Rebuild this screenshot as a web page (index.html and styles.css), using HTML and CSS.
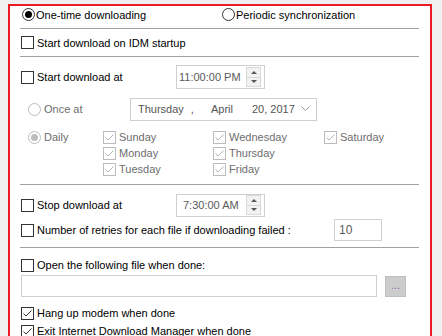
FILE: index.html
```html
<!DOCTYPE html>
<html>
  <head>
    <title>Scheduler</title>
    <link rel="stylesheet" href="styles.css">
  </head>
  <body>
    <div class="frame">
      <div class="row row-mode">
        <label class="opt opt-first"><span class="rb on"></span>One-time downloading</label>
        <label class="opt"><span class="rb"></span>Periodic synchronization</label>
      </div>
      <div class="sep sep-1"></div>

      <div class="row row-startup">
        <label class="opt"><span class="cb"></span>Start download on IDM startup</label>
      </div>
      <div class="sep"></div>

      <div class="row row-start">
        <label class="opt opt-time"><span class="cb"></span>Start download at</label>
        <div class="timebox">
          <span class="time-text">11:00:00 PM</span>
          <span class="spin"><span class="up"></span><span class="down"></span></span>
        </div>
      </div>

      <div class="row row-once">
        <label class="opt opt-sub dis"><span class="rb dis"></span>Once at</label>
        <div class="datebox">
          <span class="d-day">Thursday</span>
          <span class="d-comma">,</span>
          <span class="d-month">April</span>
          <span class="d-year">20, 2017</span>
          <svg class="chev" width="9" height="6" viewBox="0 0 9 6"><polyline points="0.5,0.5 4.5,4.5 8.5,0.5" fill="none" stroke="#9a9a9a" stroke-width="1"/></svg>
        </div>
      </div>

      <div class="daily">
        <label class="opt opt-sub opt-daily dis"><span class="rb dis on"></span>Daily</label>
        <div class="days">
          <label class="opt dis"><span class="cb dis on"><svg width="11" height="11" viewBox="0 0 11 11"><polyline points="1.5,5.5 4,8 9.5,2.5" fill="none" stroke="#b4b4b4" stroke-width="1"/></svg></span>Sunday</label>
          <label class="opt dis"><span class="cb dis on"><svg width="11" height="11" viewBox="0 0 11 11"><polyline points="1.5,5.5 4,8 9.5,2.5" fill="none" stroke="#b4b4b4" stroke-width="1"/></svg></span>Wednesday</label>
          <label class="opt dis"><span class="cb dis on"><svg width="11" height="11" viewBox="0 0 11 11"><polyline points="1.5,5.5 4,8 9.5,2.5" fill="none" stroke="#b4b4b4" stroke-width="1"/></svg></span>Saturday</label>
          <label class="opt dis"><span class="cb dis on"><svg width="11" height="11" viewBox="0 0 11 11"><polyline points="1.5,5.5 4,8 9.5,2.5" fill="none" stroke="#b4b4b4" stroke-width="1"/></svg></span>Monday</label>
          <label class="opt dis"><span class="cb dis on"><svg width="11" height="11" viewBox="0 0 11 11"><polyline points="1.5,5.5 4,8 9.5,2.5" fill="none" stroke="#b4b4b4" stroke-width="1"/></svg></span>Thursday</label>
          <span></span>
          <label class="opt dis"><span class="cb dis on"><svg width="11" height="11" viewBox="0 0 11 11"><polyline points="1.5,5.5 4,8 9.5,2.5" fill="none" stroke="#b4b4b4" stroke-width="1"/></svg></span>Tuesday</label>
          <label class="opt dis"><span class="cb dis on"><svg width="11" height="11" viewBox="0 0 11 11"><polyline points="1.5,5.5 4,8 9.5,2.5" fill="none" stroke="#b4b4b4" stroke-width="1"/></svg></span>Friday</label>
        </div>
      </div>
      <div class="sep sep-3"></div>

      <div class="row row-stop">
        <label class="opt opt-time"><span class="cb"></span>Stop download at</label>
        <div class="timebox timebox-stop">
          <span class="time-text">7:30:00 AM</span>
          <span class="spin"><span class="up"></span><span class="down"></span></span>
        </div>
      </div>
      <div class="row row-retry">
        <label class="opt opt-retry"><span class="cb"></span>Number of retries for each file if downloading failed :</label>
        <div class="numbox">10</div>
      </div>
      <div class="sep sep-4"></div>

      <div class="row row-open">
        <label class="opt"><span class="cb"></span>Open the following file when done:</label>
      </div>
      <div class="row row-file">
        <div class="filebox"></div>
        <div class="browse">...</div>
      </div>

      <div class="row row-hang">
        <label class="opt"><span class="cb on"><svg width="11" height="11" viewBox="0 0 11 11"><polyline points="1.5,5.5 4,8 9.5,2.5" fill="none" stroke="#333" stroke-width="1"/></svg></span>Hang up modem when done</label>
      </div>
      <div class="row row-exit">
        <label class="opt"><span class="cb on"><svg width="11" height="11" viewBox="0 0 11 11"><polyline points="1.5,5.5 4,8 9.5,2.5" fill="none" stroke="#333" stroke-width="1"/></svg></span>Exit Internet Download Manager when done</label>
      </div>
    </div>
  </body>
</html>
```

FILE: styles.css
```css
html, body {
  margin: 0;
  height: 100%;
  overflow: hidden;
}
body {
  background-color: #f0f0f0;
  font-family: "Liberation Sans", Arial, sans-serif;
  font-size: 11px;
  color: #000;
}
.frame {
  margin: 4px 0 0 8px;
  width: 400px;
  height: 330px;
  overflow: hidden;
  padding: 0 10px;
  background-color: #fff;
  border: 2px solid #ed1c24;
  border-bottom: none;
}
.row {
  display: flex;
  align-items: center;
}
.opt {
  display: flex;
  align-items: center;
  white-space: nowrap;
}
.dis {
  color: #6d6d6d;
}
.sep {
  width: 399px;
  height: 1px;
  background-color: #a0a0a0;
}

/* radio buttons */
.rb {
  box-sizing: border-box;
  width: 13px;
  height: 13px;
  border: 1px solid #333;
  border-radius: 50%;
  margin: 0 1px 0 2px;
  display: flex;
  align-items: center;
  justify-content: center;
  background-color: #fff;
}
.rb.on::after {
  content: "";
  width: 7px;
  height: 7px;
  border-radius: 50%;
  background-color: #000;
}
.rb.dis {
  border-color: #bcbcbc;
}
.rb.dis.on::after {
  background-color: #bcbcbc;
}

/* check boxes */
.cb {
  box-sizing: border-box;
  width: 13px;
  height: 13px;
  border: 1px solid #333;
  margin: 0 3px 0 1px;
  display: flex;
  align-items: center;
  justify-content: center;
  background-color: #fff;
}
.cb.dis {
  border-color: #bcbcbc;
}

/* top rows */
.row-mode {
  height: 17px;
}
.opt-first {
  width: 200px;
}
.sep-1 {
  margin-top: 5px;
}
.row-startup {
  height: 27px;
}
.row-start {
  height: 40px;
}
.opt-time {
  width: 156px;
}
.timebox {
  box-sizing: border-box;
  width: 89px;
  height: 24px;
  border: 1px solid #cfcfcf;
  display: flex;
  align-items: center;
  padding-left: 2px;
  color: #5a5a5a;
  white-space: nowrap;
}
.time-text {
  flex: 1;
}
.spin {
  box-sizing: border-box;
  width: 15px;
  height: 20px;
  margin-right: 3px;
  border: 1px solid #d9d9d9;
  display: flex;
  flex-direction: column;
}
.up, .down {
  flex: 1;
  display: flex;
  align-items: center;
  justify-content: center;
  background-color: #f2f2f2;
}
.up {
  border-bottom: 1px solid #d9d9d9;
}
.up::after {
  content: "";
  border: 3px solid transparent;
  border-bottom: 3px solid #555;
  border-top: none;
}
.down::after {
  content: "";
  border: 3px solid transparent;
  border-top: 3px solid #555;
  border-bottom: none;
}

/* once at */
.row-once {
  height: 24px;
}
.opt-sub {
  width: 110px;
  padding-left: 6px;
  box-sizing: border-box;
}
.opt-sub .rb {
  margin-right: 3px;
}
.datebox {
  box-sizing: border-box;
  width: 187px;
  height: 23px;
  border: 1px solid #cfcfcf;
  display: flex;
  align-items: center;
  color: #555;
  white-space: nowrap;
}
.d-day {
  margin-left: 7px;
}
.d-comma {
  margin-left: 7px;
}
.d-month {
  margin-left: 17px;
}
.d-year {
  margin-left: 19px;
}
.chev {
  margin-left: auto;
  margin-right: 6px;
}

/* daily */
.daily {
  display: flex;
  margin-top: 8px;
}
.opt-daily {
  width: 83px;
  height: 16px;
}
.days {
  display: grid;
  grid-template-columns: 110px 111px auto;
  grid-auto-rows: 16px;
}
.days .cb {
  margin: 0 3px 0 0;
}
.sep-3 {
  margin-top: 7px;
}

/* stop / retries */
.row-stop {
  margin-top: 8px;
  height: 24px;
}
.timebox-stop {
  height: 23px;
  padding-left: 6px;
}
.row-retry {
  margin-top: 1px;
  height: 24px;
}
.opt-retry {
  width: 314px;
}
.numbox {
  box-sizing: border-box;
  width: 48px;
  height: 22px;
  border: 1px solid #cfcfcf;
  padding: 3px 0 0 4px;
  color: #5a5a5a;
  font-size: 12px;
}
.sep-4 {
  margin-top: 5px;
}

/* open file */
.row-open {
  margin-top: 10px;
  height: 14px;
}
.row-file {
  margin-top: 3px;
  height: 22px;
}
.filebox {
  box-sizing: border-box;
  margin-left: 1px;
  width: 356px;
  height: 22px;
  border: 1px solid #cfcfcf;
}
.browse {
  box-sizing: border-box;
  margin-left: 8px;
  width: 21px;
  height: 21px;
  background-color: #cccccc;
  border: 1px solid #bfbfbf;
  color: #8c6a9a;
  text-align: center;
  line-height: 17px;
}
.row-hang {
  margin-top: 9px;
  height: 14px;
}
.row-exit {
  margin-top: 4px;
  height: 14px;
}
```
